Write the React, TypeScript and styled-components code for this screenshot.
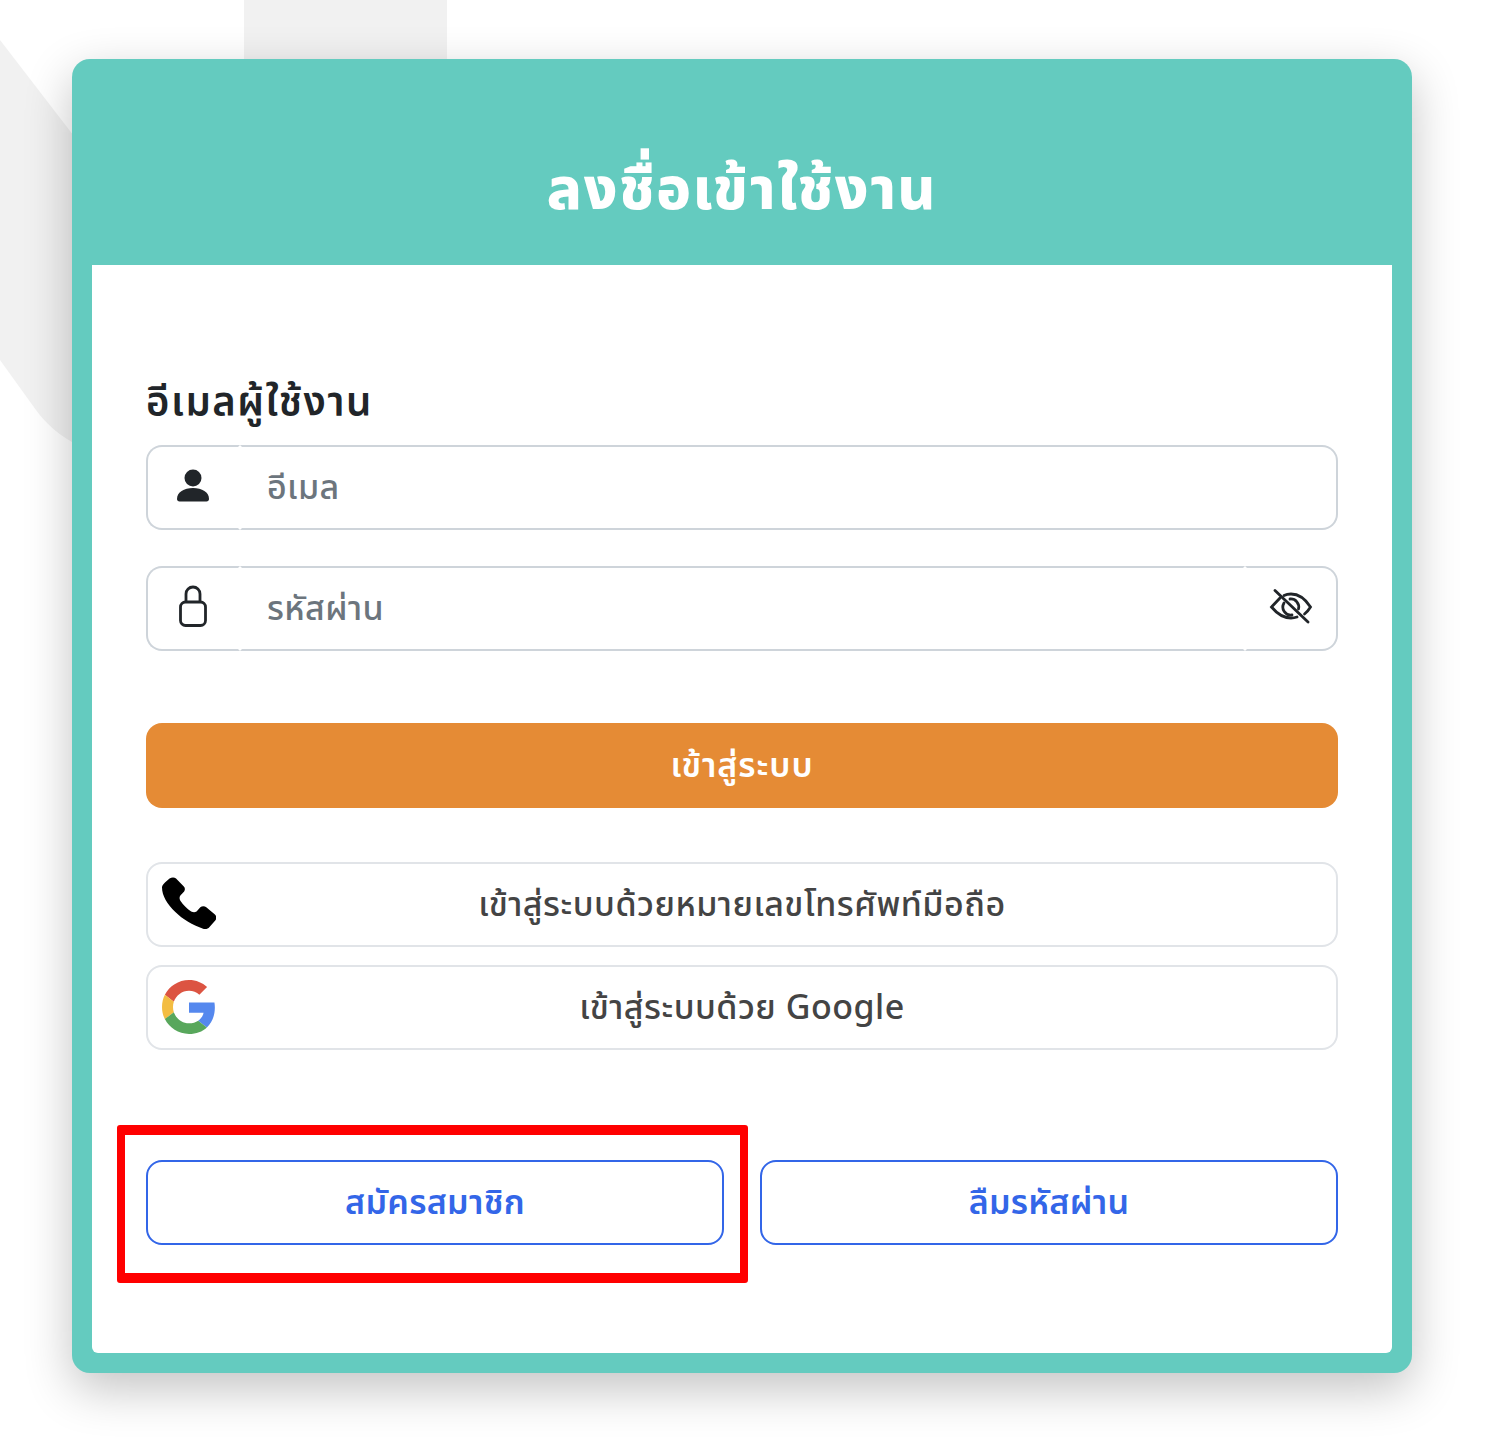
import React from "react";
import styled, { createGlobalStyle } from "styled-components";

const GlobalStyle = createGlobalStyle`
  html, body {
    margin: 0;
    padding: 0;
    background: #fff;
    font-family: "Noto Sans", "Noto Sans Thai", "Noto Sans Thai Looped", "DejaVu Sans", sans-serif;
  }
  * { box-sizing: border-box; }
`;

const Page = styled.div`
  position: relative;
  width: 1500px;
  height: 1446px;
  padding: 59px 88px 0 72px;
  overflow: hidden;
  background: #fff;
`;

const Backdrop = styled.svg`
  position: absolute;
  top: 0;
  left: 0;
`;

const Card = styled.div`
  position: relative;
  display: flex;
  flex-direction: column;
  height: 1314px;
  border-radius: 18px;
  background: #64cbbf;
  padding: 0 20px 20px;
  box-shadow: 0 16px 48px rgba(0, 0, 0, 0.24);
`;

const Header = styled.div`
  display: flex;
  align-items: center;
  justify-content: center;
  height: 206px;
  padding-top: 50px;
`;

const Title = styled.h1`
  margin: 0;
  color: #fff;
  font-size: 58px;
  font-weight: 800;
  letter-spacing: 1.7px;
  line-height: 60px;
`;

const Body = styled.div`
  flex: 1;
  display: flex;
  flex-direction: column;
  background: #fff;
  border-radius: 0 0 6px 6px;
  padding: 108px 54px 0;
`;

const Label = styled.label`
  color: #212529;
  font-size: 40px;
  font-weight: 600;
  letter-spacing: 1.5px;
  line-height: 56px;
  margin-bottom: 16px;
`;

const InputRow = styled.div<{ $gap?: number }>`
  display: flex;
  align-items: center;
  height: 85px;
  margin-bottom: ${({ $gap }) => $gap ?? 0}px;
`;

const InputIcon = styled.span`
  display: flex;
  align-items: center;
  justify-content: center;
  width: 94px;
  height: 100%;
  padding-bottom: 4px;
  color: #212529;
  border: 2px solid #ced4da;
  border-right-color: transparent;
  border-radius: 16px 0 0 16px;
`;

const Field = styled.span<{ $open?: boolean }>`
  flex: 1;
  display: flex;
  align-items: center;
  height: 100%;
  color: #6c757d;
  font-size: 34px;
  font-weight: 500;
  letter-spacing: 0.4px;
  padding: 2px 0 0 25px;
  border: 2px solid #ced4da;
  border-left-color: transparent;
  border-right-color: ${({ $open }) => ($open ? "transparent" : "#ced4da")};
  border-radius: ${({ $open }) => ($open ? "0" : "0 16px 16px 0")};
`;

const EyeBox = styled.span`
  display: flex;
  align-items: center;
  justify-content: center;
  width: 93px;
  height: 100%;
  padding: 0 2px 4px 0;
  border: 2px solid #ced4da;
  border-left-color: transparent;
  border-radius: 0 16px 16px 0;
`;

const SubmitButton = styled.button`
  height: 85px;
  border: none;
  border-radius: 16px;
  background: #e58b35;
  color: #fff;
  font: inherit;
  font-size: 34px;
  font-weight: 600;
  letter-spacing: 0.9px;
  padding: 2px 0 0;
  margin-bottom: 54px;
`;

const SocialButton = styled.button<{ $gap?: number }>`
  position: relative;
  height: 85px;
  border: 2px solid #e1e4e8;
  border-radius: 16px;
  background: #fff;
  color: #444;
  font: inherit;
  font-size: 34px;
  font-weight: 500;
  letter-spacing: 0.5px;
  padding: 2px 0 0;
  margin-bottom: ${({ $gap }) => $gap ?? 0}px;
`;

const SocialIcon = styled.span`
  position: absolute;
  left: 14px;
  top: 13px;
  display: flex;
`;

const LinkRow = styled.div`
  display: grid;
  grid-template-columns: 1fr 1fr;
  gap: 36px;
  margin-top: 110px;
`;

const LinkCell = styled.div`
  position: relative;
`;

const OutlineButton = styled.button`
  width: 100%;
  height: 85px;
  border: 2px solid #3366e8;
  border-radius: 16px;
  background: #fff;
  color: #3366e8;
  font: inherit;
  font-size: 34px;
  font-weight: 600;
  letter-spacing: 0.3px;
  padding: 2px 0 0;
`;

const Highlight = styled.div`
  position: absolute;
  left: -29px;
  top: -35px;
  width: 631px;
  height: 158px;
  border: solid #ff0000;
  border-width: 10px 8px;
  border-radius: 3px;
  pointer-events: none;
`;

const PersonIcon = () => (
  <svg width="36" height="36" viewBox="0 0 36 36" fill="#212529">
    <circle cx="18" cy="10" r="8.5" />
    <path d="M2 31c0-7 7-11 16-11s16 4 16 11c0 1.5-1 2.500-2.500 2.500h-27C3 33.500 2 32.500 2 31z" />
  </svg>
);

const LockIcon = () => (
  <svg width="30" height="44" viewBox="0 1 30 44" fill="none" stroke="#212529" strokeWidth="2.800">
    <path d="M8 19V10a7 7 0 0 1 14 0v9" />
    <rect x="2.500" y="18" width="25" height="23.500" rx="5" />
  </svg>
);

const EyeOffIcon = () => (
  <svg width="44" height="36" viewBox="0 0 44 36" fill="none" stroke="#212529" strokeWidth="2.800" strokeLinecap="round">
    <path d="M11 9 2.500 18c5 6 11 11 19.500 11 2 0 4-.3 6-1" />
    <path d="M15 6.500C17 5.500 19.500 5 22 5c8.500 0 15 6 19.500 13-1.500 2.500-3.500 5-6 7" />
    <path d="M15 14a8 8 0 0 0 8 12" />
    <path d="M21 10a8 8 0 0 1 8.500 10" />
    <path d="M6 1.500 39 33" />
  </svg>
);

const PhoneIcon = () => (
  <svg width="54" height="54" viewBox="2 0.500 50 52.500" preserveAspectRatio="none">
    <path
      d="M2 10.500c0-2 1.500-3.500 3-5L9 2c2-1.500 4.500-1.500 6 0l7 7.500c1.500 1.500 1.500 3.500.5 5L19 18.500c-1 1.500-1 3 0 5 2.500 4 6 7.500 10 10.500 2 1 3.500 1 5 0l3.500-4c1.500-1.500 4-1.500 5.500 0l8 7c1.500 1.500 2 3.500.5 5.500l-5.500 6.500c-1.500 2-4 2.500-6.500 1.500C22 44.500 2 27 2 10.500z"
      fill="#000"
    />
  </svg>
);

const GoogleIcon = () => (
  <svg width="54" height="54" viewBox="0 0 48 48">
    <path fill="#dc5442" d="M24 9.500c3.540 0 6.710 1.220 9.210 3.600l6.850-6.850C35.900 2.380 30.470 0 24 0 14.620 0 6.510 5.380 2.560 13.220l7.980 6.190C12.430 13.720 17.740 9.500 24 9.500z" />
    <path fill="#5588ee" d="M46.980 24.550c0-1.570-.15-3.090-.38-4.550H24v9.020h12.940c-.58 2.960-2.260 5.480-4.780 7.180l7.730 6c4.510-4.180 7.090-10.360 7.090-17.650z" />
    <path fill="#f3bd42" d="M10.530 28.590c-.48-1.450-.76-2.990-.76-4.590s.27-3.140.76-4.590l-7.980-6.190C.92 16.460 0 20.120 0 24c0 3.880.92 7.540 2.560 10.780l7.970-6.190z" />
    <path fill="#58a75c" d="M24 48c6.480 0 11.930-2.130 15.890-5.810l-7.730-6c-2.150 1.450-4.920 2.300-8.160 2.300-6.260 0-11.570-4.220-13.470-9.910l-7.980 6.190C6.510 42.620 14.620 48 24 48z" />
  </svg>
);

export default function App() {
  return (
    <Page>
      <GlobalStyle />
      <Backdrop width="1500" height="1446" viewBox="0 0 1500 1446">
        <rect x="244" y="0" width="203" height="100" fill="#f1f1f1" />
        <path d="M0 40 L100 170 L100 470 L72 442 C55 432 45 422 36 410 L0 360 Z" fill="#f1f1f1" />
      </Backdrop>
      <Card>
        <Header>
          <Title>ลงชื่อเข้าใช้งาน</Title>
        </Header>
        <Body>
          <Label>อีเมลผู้ใช้งาน</Label>
          <InputRow $gap={36}>
            <InputIcon>
              <PersonIcon />
            </InputIcon>
            <Field>อีเมล</Field>
          </InputRow>
          <InputRow $gap={72}>
            <InputIcon>
              <LockIcon />
            </InputIcon>
            <Field $open>รหัสผ่าน</Field>
            <EyeBox>
              <EyeOffIcon />
            </EyeBox>
          </InputRow>
          <SubmitButton>เข้าสู่ระบบ</SubmitButton>
          <SocialButton $gap={18}>
            <SocialIcon>
              <PhoneIcon />
            </SocialIcon>
            เข้าสู่ระบบด้วยหมายเลขโทรศัพท์มือถือ
          </SocialButton>
          <SocialButton>
            <SocialIcon>
              <GoogleIcon />
            </SocialIcon>
            เข้าสู่ระบบด้วย Google
          </SocialButton>
          <LinkRow>
            <LinkCell>
              <OutlineButton>สมัครสมาชิก</OutlineButton>
              <Highlight />
            </LinkCell>
            <LinkCell>
              <OutlineButton>ลืมรหัสผ่าน</OutlineButton>
            </LinkCell>
          </LinkRow>
        </Body>
      </Card>
    </Page>
  );
}
